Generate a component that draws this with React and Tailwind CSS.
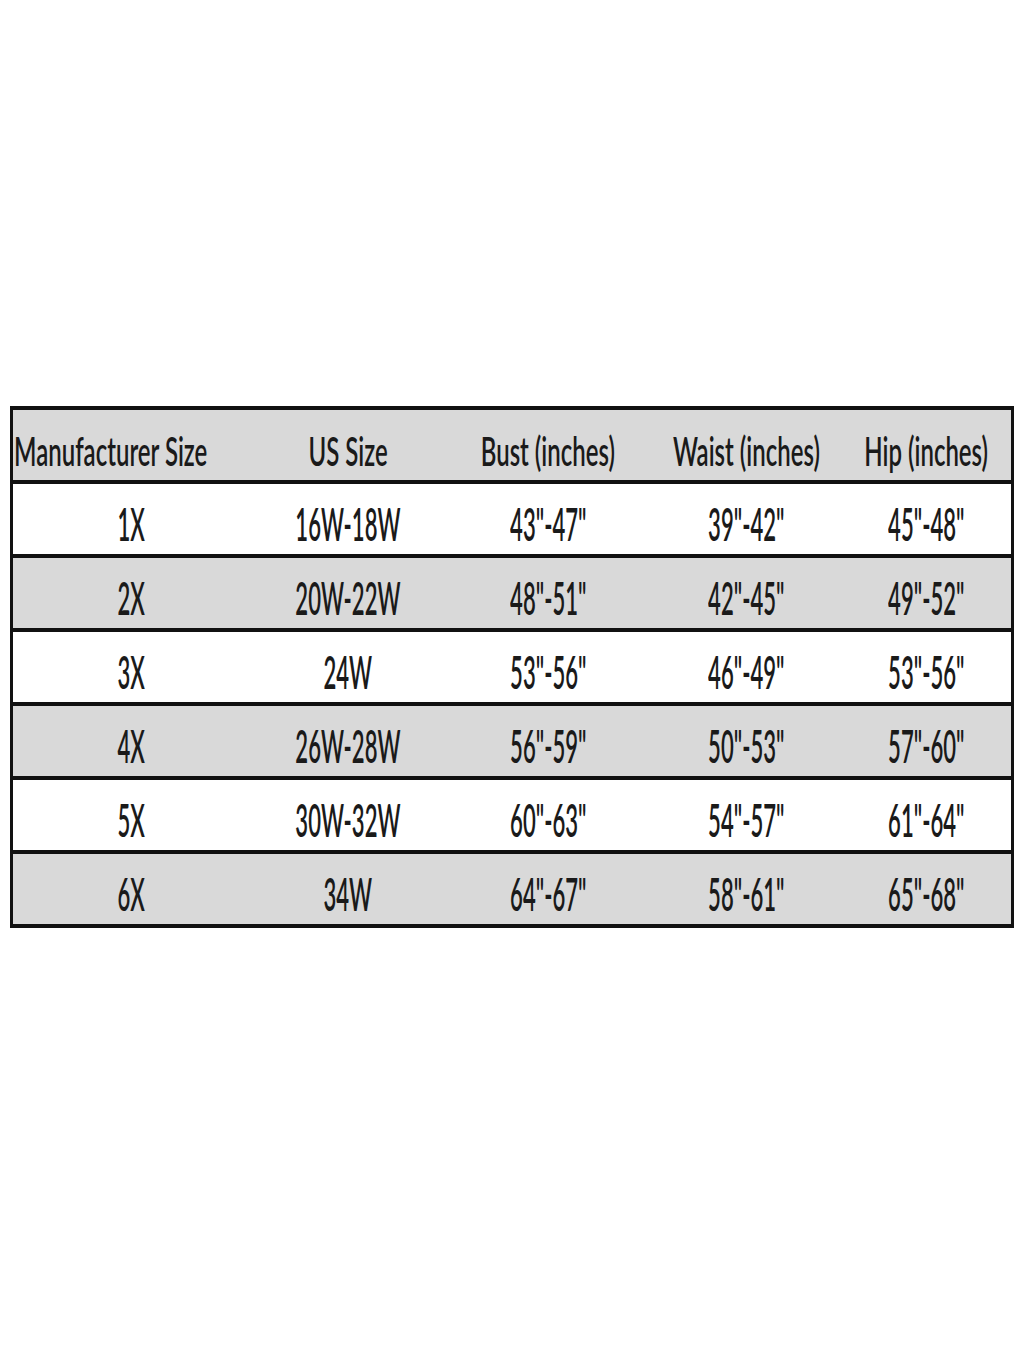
import React from "react";

const rows = [
  ["1X", "16W-18W", '43"-47"', '39"-42"', '45"-48"'],
  ["2X", "20W-22W", '48"-51"', '42"-45"', '49"-52"'],
  ["3X", "24W", '53"-56"', '46"-49"', '53"-56"'],
  ["4X", "26W-28W", '56"-59"', '50"-53"', '57"-60"'],
  ["5X", "30W-32W", '60"-63"', '54"-57"', '61"-64"'],
  ["6X", "34W", '64"-67"', '58"-61"', '65"-68"'],
];

const headers = ["US Size", "Bust (inches)", "Waist (inches)", "Hip (inches)"];

export default function App() {
  return (
    <div
      className="w-[1024px] h-[1365px] bg-white pt-[406px] px-[10px] text-[#1a1a1a]"
      style={{ fontFamily: "Lato, 'Open Sans', sans-serif" }}
    >
      <div className="border-t-4 border-x-[3px] border-[#111] bg-white">
        <div className="grid grid-cols-[237px_196px_204px_192px_minmax(0,1fr)] h-[74px] border-b-4 border-[#111] bg-[#d9d9d9] items-center">
          <div className="min-w-0 pl-[1px] pt-[12px] text-[40px] leading-none whitespace-nowrap font-semibold">
            <span className="inline-block origin-left scale-x-[0.6]">Manufacturer Size</span>
          </div>
          {headers.map((h) => (
            <div key={h} className="min-w-0 flex justify-center pt-[12px] text-[40px] leading-none whitespace-nowrap font-semibold">
              <span className="inline-block shrink-0 scale-x-[0.6]">{h}</span>
            </div>
          ))}
        </div>
        {rows.map((r, i) => (
          <div
            key={r[0]}
            className={
              "grid grid-cols-[237px_196px_204px_192px_minmax(0,1fr)] h-[74px] border-b-4 border-[#111] items-center " +
              (i % 2 === 1 ? "bg-[#d9d9d9]" : "bg-white")
            }
          >
            {r.map((c, j) => (
              <div key={j} className="min-w-0 flex justify-center pt-[8px] text-[47px] leading-none whitespace-nowrap font-semibold">
                <span className="inline-block shrink-0 scale-x-[0.47]">{c}</span>
              </div>
            ))}
          </div>
        ))}
      </div>
    </div>
  );
}
